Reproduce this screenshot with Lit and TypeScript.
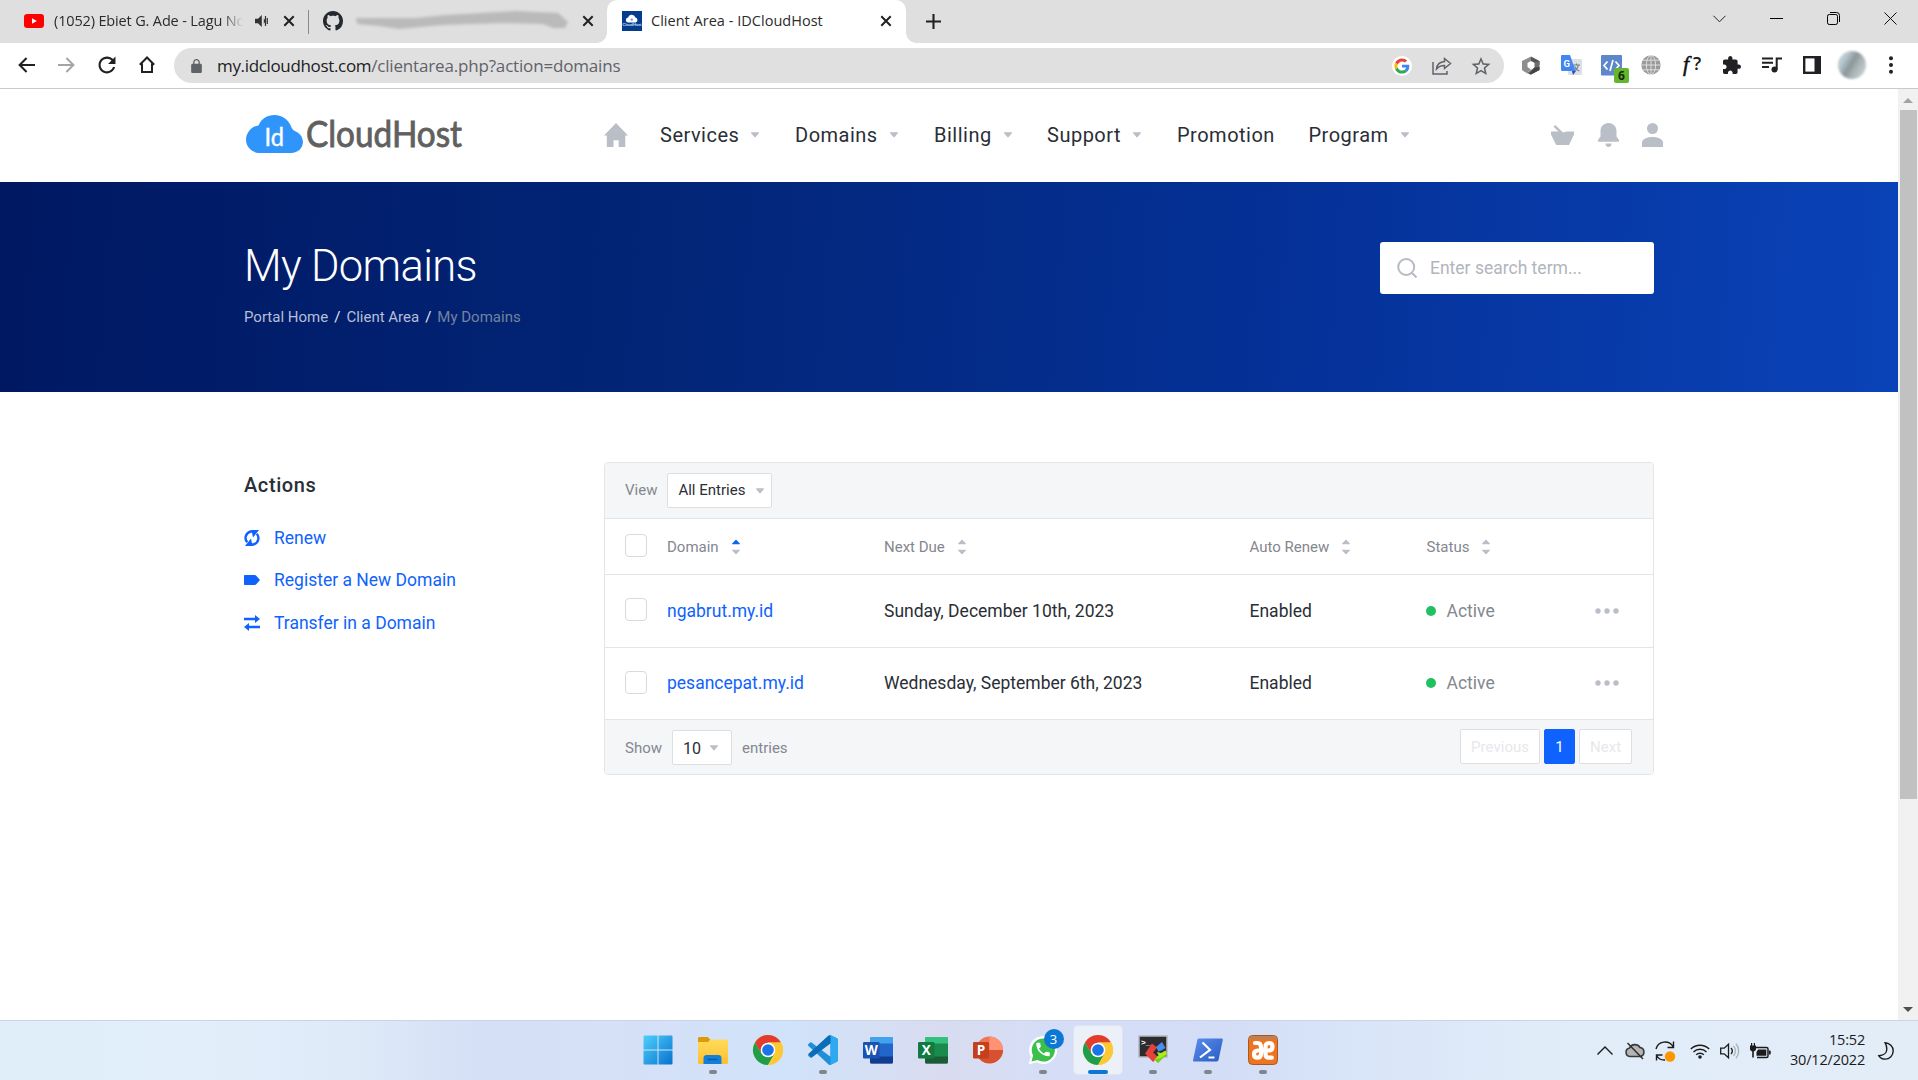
import { LitElement, html, svg, css, nothing } from "lit";
import { customElement } from "lit/decorators.js";
import { classMap } from "lit/directives/class-map.js";

const icon = (w: number, h: number, box: string, body: unknown) =>
  html`<svg width=${w} height=${h} viewBox=${box} fill="none">${body}</svg>`;

const caret = () =>
  icon(8, 6, "0 0 8 6", svg`<path d="M.6.3h6.8c.6 0 .8.6.4 1L4.6 5.1c-.3.4-.9.4-1.2 0L.2 1.3C-.2.9 0 .3.6.3z" fill="#b9bec7"/>`);

const closeX = () =>
  icon(12, 12, "0 0 12 12", svg`<path d="M1.3 1.3l9.4 9.4M10.7 1.3l-9.4 9.4" stroke="#202124" stroke-width="2"/>`);

const base = css`
  * { box-sizing: border-box; }
  svg { display: block; flex: none; overflow: visible; }
`;

@customElement("tab-strip")
class TabStrip extends LitElement {
  static styles = [base, css`
    :host { display: flex; height: 43px; background: #dfdfdf; font: 15px "Open Sans", "Noto Sans", sans-serif; color: #2b2b2b; }
    .tab { display: flex; align-items: center; height: 42px; }
    .video { padding-left: 24px; width: 308px; }
    .title { white-space: nowrap; overflow: hidden; line-height: 20px; font-size: 14.5px; letter-spacing: 0.02px; }
    .video .title { width: 191px; margin: 0 10px 0 10px; letter-spacing: -0.15px; mask-image: linear-gradient(90deg, #000 88%, transparent 99%); }
    .audio { margin-right: 14px; }
    .divider { width: 1px; height: 24px; margin-top: 10px; background: #8a8a8a; }
    .repo { padding-left: 14px; width: 298px; }
    .smudge { width: 217px; margin: 0 11px 0 11px; }
    .active { width: 299px; height: 43px; padding: 0 14px 1px 15px; background: #fff; border-radius: 10px 10px 0 0; position: relative; }
    .active::before, .active::after { content: ""; position: absolute; bottom: 0; width: 10px; height: 10px; }
    .active::before { left: -10px; background: radial-gradient(circle at 0 0, transparent 9.5px, #fff 10px); }
    .active::after { right: -10px; background: radial-gradient(circle at 100% 0, transparent 9.5px, #fff 10px); }
    .active .title { width: 230px; margin-left: 9px; }
    .new { display: flex; align-items: center; height: 42px; margin-left: 20px; flex: 1; }
    .controls { display: flex; align-items: center; height: 37px; gap: 43px; padding-right: 21px; }
    .controls svg { margin-left: 1px; }
  `];

  render() {
    return html`
      <div class="tab video">
        ${icon(20, 14, "0 0 20 14", svg`<rect width="20" height="14" rx="3.2" fill="#f00"/><path d="M8 4.2v5.6L12.8 7z" fill="#fff"/>`)}
        <span class="title">(1052) Ebiet G. Ade - Lagu No</span>
        <span class="audio">${icon(14, 14, "0 0 14 14", svg`<path d="M0 4.7h3L6.8 1v12L3 9.3H0z" fill="#333"/><path d="M8.8 4.2a3.6 3.6 0 010 5.6z" fill="#333"/><path d="M10.5 2v10M12.3 4v6" stroke="#333" stroke-width="1.2"/>`)}</span>
        ${closeX()}
      </div>
      <div class="divider"></div>
      <div class="tab repo">
        ${icon(20, 20, "0 0 16 16", svg`<path fill="#24292f" d="M8 0C3.58 0 0 3.58 0 8c0 3.54 2.29 6.53 5.47 7.59.4.07.55-.17.55-.38 0-.19-.01-.82-.01-1.49-2.01.37-2.53-.49-2.69-.94-.09-.23-.48-.94-.82-1.13-.28-.15-.68-.52-.01-.53.63-.01 1.08.58 1.23.82.72 1.21 1.87.87 2.33.66.07-.52.28-.87.51-1.07-1.78-.2-3.64-.89-3.64-3.95 0-.87.31-1.59.82-2.15-.08-.2-.36-1.02.08-2.12 0 0 .67-.21 2.2.82.64-.18 1.32-.27 2-.27.68 0 1.36.09 2 .27 1.53-1.04 2.2-.82 2.2-.82.44 1.1.16 1.92.08 2.12.51.56.82 1.27.82 2.15 0 3.07-1.87 3.75-3.65 3.95.29.25.54.73.54 1.48 0 1.07-.01 1.93-.01 2.2 0 .21.15.46.55.38A8.01 8.01 0 0016 8c0-4.42-3.58-8-8-8z"/>`)}
        <span class="smudge">${icon(217, 20, "0 0 217 20", svg`
          <defs><filter id="s" x="-5%" y="-50%" width="110%" height="200%"><feGaussianBlur stdDeviation="1.8"/></filter></defs>
          <path filter="url(#s)" d="M2 7l60 0 30-3 70-4 42 2 10 9-3 6-12 0-10-4-40-1-60 2-44 4-20-3-22-2z" fill="#bababa"/>`)}</span>
        ${closeX()}
      </div>
      <div class="tab active">
        ${icon(20, 20, "0 0 20 20", svg`<rect width="20" height="20" fill="#053d8c"/><path d="M6.5 11.4a2.4 2.4 0 01-.4-4.8 3.8 3.8 0 017.3-.2 2.6 2.6 0 01.3 5z" fill="#fff"/><circle cx="9.8" cy="8.6" r="1.2" fill="#5aa0ec"/><text x="10" y="15.4" font-size="4" text-anchor="middle" font-weight="700" fill="#cfe0f5" font-family="Lato">CloudHost</text>`)}
        <span class="title">Client Area - IDCloudHost</span>
        ${closeX()}
      </div>
      <div class="new">${icon(15, 15, "0 0 15 15", svg`<path d="M7.5 0v15M0 7.5h15" stroke="#202124" stroke-width="2.1"/>`)}</div>
      <div class="controls">
        ${icon(13, 8, "0 0 13 8", svg`<path d="M.5.8l6 6 6-6" stroke="#222"/>`)}
        ${icon(13, 13, "0 0 13 13", svg`<path d="M0 6.500h13" stroke="#000"/>`)}
        ${icon(13, 13, "0 0 13 13", svg`<rect x=".5" y="2.5" width="10" height="10" rx="1.8" stroke="#000"/><path d="M3 .5h6.5a3 3 0 013 3V10" stroke="#000"/>`)}
        ${icon(13, 13, "0 0 13 13", svg`<path d="M.5.5l12 12M12.5.5l-12 12" stroke="#111"/>`)}
      </div>`;
  }
}

@customElement("address-bar")
class AddressBar extends LitElement {
  static styles = [base, css`
    :host { display: flex; align-items: center; height: 46px; padding: 0 7px 1px 18px; background: #fff; border-bottom: 1px solid #c9cacc; font-family: "Open Sans", "Noto Sans", sans-serif; }
    .nav { display: flex; align-items: center; gap: 23px; width: 156px; margin-top: -1px; }
    .omni { display: flex; align-items: center; width: 1330px; height: 35px; border-radius: 18px; background: #e0e0e0; padding: 0 13px 0 17px; margin-top: 1px; }
    .url { flex: 1; margin-left: 15px; font-size: 17px; line-height: 24px; color: #5f6368; letter-spacing: -0.17px; white-space: nowrap; }
    .host { color: #202124; letter-spacing: -0.34px; }
    .acts { display: flex; align-items: center; gap: 19.5px; }
    .ext { display: grid; grid-template-columns: repeat(10, 40px); align-items: center; justify-items: center; padding-left: 7px; }
    .ext svg:nth-child(n + 6):nth-child(-n + 9) { margin-left: 2px; }
  `];

  render() {
    return html`
      <div class="nav">
        ${icon(17, 16, "0 0 17 16", svg`<path d="M17 8H1.6M8.6 1L1.6 8l7 7" stroke="#202124" stroke-width="2"/>`)}
        ${icon(17, 16, "0 0 17 16", svg`<path d="M0 8h15.4M8.4 1l7 7-7 7" stroke="#a5a5a5" stroke-width="2"/>`)}
        ${icon(18, 18, "3.5 3.5 17 17", svg`<path fill="#202124" d="M17.65 6.35C16.2 4.9 14.21 4 12 4c-4.42 0-7.99 3.58-7.99 8s3.57 8 7.99 8c3.73 0 6.84-2.55 7.73-6h-2.08c-.82 2.33-3.04 4-5.65 4-3.31 0-6-2.69-6-6s2.69-6 6-6c1.66 0 3.14.69 4.22 1.78L13 11h7V4l-2.35 2.35z"/>`)}
        ${icon(16, 17, "0 0 16 17", svg`<path d="M.8 8.8L8 1.5l7.2 7.3M3 7.5V16h10V7.5" stroke="#202124" stroke-width="2"/>`)}
      </div>
      <div class="omni">
        ${icon(11, 14, "4 1 16 21", svg`<path fill="#5f6368" d="M18 8h-1V6c0-2.76-2.24-5-5-5S7 3.24 7 6v2H6c-1.1 0-2 .9-2 2v10c0 1.1.9 2 2 2h12c1.1 0 2-.9 2-2V10c0-1.1-.9-2-2-2zM9 6c0-1.66 1.34-3 3-3s3 1.34 3 3v2H9V6z"/>`)}
        <span class="url"><span class="host">my.idcloudhost.com</span>/clientarea.php?action=domains</span>
        <div class="acts">
          ${icon(20, 20, "0 0 20 20", svg`<circle cx="10" cy="10" r="10" fill="#fff"/><g transform="translate(2.4 2.4) scale(.317)">
            <path fill="#4285F4" d="M46.98 24.55c0-1.57-.15-3.09-.38-4.55H24v9.02h12.94c-.58 2.96-2.26 5.48-4.78 7.18l7.73 6c4.51-4.18 7.09-10.36 7.09-17.65z"/>
            <path fill="#EA4335" d="M24 9.5c3.54 0 6.71 1.22 9.21 3.6l6.85-6.85C35.9 2.38 30.47 0 24 0 14.62 0 6.51 5.38 2.56 13.22l7.98 6.19C12.43 13.72 17.74 9.5 24 9.5z"/>
            <path fill="#FBBC05" d="M10.53 28.59A14.5 14.5 0 019.77 24c0-1.6.27-3.14.76-4.59l-7.98-6.19A23.9 23.9 0 000 24c0 3.88.92 7.54 2.56 10.78l7.97-6.19z"/>
            <path fill="#34A853" d="M24 48c6.48 0 11.93-2.13 15.89-5.81l-7.73-6c-2.15 1.45-4.92 2.3-8.16 2.3-6.26 0-11.57-4.22-13.47-9.91l-7.98 6.19C6.51 42.62 14.62 48 24 48z"/></g>`)}
          ${icon(20, 18, "0 0 20 18", svg`<path d="M1 5v12h14v-3M12.5 1.5l6 5-6 5V8.600C9 8.600 6.500 9.800 4.500 12c.5-4.500 3.500-7 8-7.400z" stroke="#5f6368" stroke-width="1.5"/>`)}
          ${icon(20, 20, "1.5 1 21 21", svg`<path fill="#5f6368" d="M22 9.24l-7.19-.62L12 2 9.19 8.63 2 9.24l5.46 4.73L5.82 21 12 17.27 18.18 21l-1.63-7.03L22 9.24zM12 15.4l-3.76 2.27 1-4.28-3.32-2.88 4.38-.38L12 6.1l1.71 4.04 4.38.38-3.32 2.88 1 4.28L12 15.4z"/>`)}
        </div>
      </div>
      <div class="ext">
        ${icon(18, 19, "0 0 18 19", svg`<path d="M9 .5L0 5v9l4.5 3 4.5-3.5L5.500 11V7L9 5z" fill="#8d8d8d"/><path d="M9 .5V5l4 2 4.500 2V5z" fill="#555"/><path d="M17.500 5v9L9 18.500 4.500 17 9 14l3.500-2.500V6.800z" fill="#6d6d6d"/><path d="M17.500 11v3L9 18.500l-2-.6 5.500-6.400z" fill="#444"/>`)}
        ${icon(21, 21, "0 0 21 21", svg`<rect x="7" y="4" width="14" height="16" rx="1.2" fill="#dcdfe3"/><path d="M12 10h7M15.500 8.500V10M13 16c2.500-1.200 4-3.500 4.300-6M13.500 11.500c.8 2.200 2.500 3.600 4.800 4.500" stroke="#6d8189" stroke-width="1.2"/><path d="M11 16h4l-3 4z" fill="#2a48c8"/><path d="M1.200 0H9l5.500 16H1.200C.5 16 0 15.500 0 14.800V1.200C0 .5.500 0 1.200 0z" fill="#4285f4"/><text x="2.400" y="11.500" font-size="9.500" font-weight="700" fill="#fff" font-family="Roboto">G</text>`)}
        ${icon(21, 21, "0 0 21 21", svg`<rect width="21" height="20.5" rx="1" fill="#5d86cb"/><path d="M6.500 6.500L3 10.500l3.500 4M14.500 6.500l3.500 4-3.500 4M12 5L9 16" stroke="#fff" stroke-width="1.7"/><rect x="13" y="13" width="15" height="15" rx="2" fill="#64b62e"/><text x="20.500" y="25" font-size="12" font-weight="700" text-anchor="middle" fill="#16280a" font-family="Open Sans">6</text>`)}
        ${icon(20, 20, "0 0 20 20", svg`<circle cx="10" cy="10" r="9.7" fill="#9a9a9a"/><g stroke="#e4e4e4" stroke-width=".9"><ellipse cx="10" cy="10" rx="4.6" ry="9.7"/><path d="M10 0v20M.4 10h19.2M1.700 5.200h16.600M1.700 14.800h16.600"/></g>`)}
        ${icon(21, 20, "0 0 21 20", svg`<text x="2" y="15.500" font-size="22" font-style="italic" fill="#111" stroke="#111" stroke-width=".5" font-family="Liberation Serif">f</text><text x="12" y="15" font-size="18" font-weight="600" fill="#1b1b1b" font-family="Open Sans">?</text>`)}
        ${icon(18, 18, "2 1 21 21", svg`<path fill="#202124" d="M20.5 11H19V7c0-1.1-.9-2-2-2h-4V3.5C13 2.12 11.88 1 10.5 1S8 2.12 8 3.5V5H4c-1.1 0-1.99.9-1.99 2v3.8H3.5c1.49 0 2.7 1.21 2.7 2.7s-1.21 2.7-2.7 2.7H2V20c0 1.1.9 2 2 2h3.8v-1.5c0-1.49 1.21-2.7 2.7-2.7 1.49 0 2.7 1.21 2.7 2.7V22H17c1.1 0 2-.9 2-2v-4h1.5c1.38 0 2.5-1.12 2.5-2.5S21.88 11 20.5 11z"/>`)}
        ${icon(20, 16, "0 0 20 16", svg`<path d="M0 1.500h11M0 5.800h11M0 10h7" stroke="#202124" stroke-width="2"/><circle cx="12.500" cy="12.500" r="3" fill="#202124"/><path d="M14.700 12.500V1.500H20" stroke="#202124" stroke-width="2"/>`)}
        ${icon(18, 18, "0 0 18 18", svg`<rect x="1.2" y="1.2" width="15.6" height="15.6" stroke="#202124" stroke-width="2.4"/><path d="M11.500 1h5.500v16h-5.500z" fill="#202124"/>`)}
        ${icon(30, 30, "0 0 30 30", svg`<defs><linearGradient id="av" x1="0" y1="0" x2="1" y2=".6"><stop offset="0" stop-color="#cfe0e6"/><stop offset=".3" stop-color="#b5c6cd"/><stop offset=".55" stop-color="#8b979b"/><stop offset=".75" stop-color="#aab4b5"/><stop offset="1" stop-color="#c2cccd"/></linearGradient><filter id="ab"><feGaussianBlur stdDeviation=".8"/></filter></defs><circle cx="15" cy="15" r="14" fill="url(#av)" filter="url(#ab)"/>`)}
        ${icon(10, 18, "0 0 10 18", svg`<g fill="#202124"><circle cx="5" cy="2.3" r="2"/><circle cx="5" cy="9" r="2"/><circle cx="5" cy="15.7" r="2"/></g>`)}
      </div>`;
  }
}

@customElement("site-header")
class SiteHeader extends LitElement {
  static styles = [base, css`
    :host { display: flex; align-items: center; height: 93px; padding: 0 235px 2px 246px; background: #fff; font: 20px Roboto, sans-serif; color: #2a2e36; }
    .logo { width: 358px; margin-top: -2px; }
    .menu { display: grid; grid-template-columns: 56px 135px 139px 113px 130px 131.5px 1fr; align-items: center; flex: 1; }
    .item { display: flex; align-items: center; gap: 12px; letter-spacing: 0.5px; line-height: 28px; }
    .tools { display: flex; align-items: center; gap: 23.5px; }
  `];

  render() {
    const items: [string, boolean][] = [["Services", true], ["Domains", true], ["Billing", true], ["Support", true], ["Promotion", false], ["Program", true]];
    return html`
      <div class="logo">${icon(218, 38, "0 0 218 38", svg`
        <path d="M13 38A13.5 13.5 0 010 25C0 17.5 5.500 11.300 12.500 10.500 15 4 21.500 0 28.500 0c8 0 14.500 5 17 12.500 1 2 2 3 4.500 4A13 13 0 0157 26.500C57 33 52 38 45 38z" fill="#2f95fb"/>
        <text x="18.5" y="30.5" font-size="25" fill="#fff" stroke="#fff" stroke-width=".4" font-family="Lato" textLength="19.5" lengthAdjust="spacingAndGlyphs">Id</text>
        <text x="60" y="32.3" font-size="37.5" fill="#60615f" stroke="#60615f" stroke-width=".9" font-family="Lato" textLength="156" lengthAdjust="spacingAndGlyphs">CloudHost</text>`)}</div>
      <nav class="menu">
        ${icon(24, 24, "0 0 24 24", svg`<path d="M12 0l12 12.500h-2.700V24h-6.600v-6.800H9.500V24H2.800V12.500H0z" fill="#b9bec7"/>`)}
        ${items.map(([label, drop]) => html`<div class="item"><span>${label}</span>${drop ? caret() : nothing}</div>`)}
      </nav>
      <div class="tools">
        ${icon(23, 20, "0 0 23 20", svg`<path d="M0 6.500h7.500L2.500 1.800 4.300 0l7.700 7.600 3.500-1.100H23v3L18 20H5.200L0 9.500z" fill="#b9bec7"/>`)}
        ${icon(21, 24, "0 0 21 24", svg`<path d="M10.500 0C5.600 0 2.500 3.700 2.500 8v5.500L0 17v1.800h21V17l-2.500-3.500V8c0-4.300-3.100-8-8-8zM7.500 20.500h6c0 2-1.200 3.500-3 3.500s-3-1.500-3-3.500z" fill="#b9bec7"/>`)}
        ${icon(21, 24, "0 0 21 24", svg`<circle cx="10.5" cy="5.5" r="5.5" fill="#b9bec7"/><path d="M0 24v-4.500C0 16.500 4 14 10.500 14S21 16.500 21 19.500V24z" fill="#b9bec7"/>`)}
      </div>`;
  }
}

@customElement("page-hero")
class PageHero extends LitElement {
  static styles = [base, css`
    :host { display: flex; justify-content: space-between; height: 210px; padding: 60px 244px 0 244px; background: linear-gradient(94deg, #001862 0%, #022577 35%, #05329a 70%, #0a43b8 100%); font-family: Roboto, sans-serif; color: #fff; }
    .title { margin: 0; font-weight: 300; font-size: 43.5px; line-height: 50px; letter-spacing: -0.65px; }
    .crumbs { display: flex; gap: 6px; margin-top: 14px; font-size: 15px; line-height: 22px; color: #b6bfd6; }
    .slash { color: #e4e8f2; }
    .here { color: #74839f; }
    .search { display: flex; align-items: center; width: 274px; height: 52px; padding-left: 17px; gap: 13px; border-radius: 3px; background: #fff; color: #b1b5bd; font-size: 17.5px; }
  `];

  render() {
    return html`
      <div>
        <h1 class="title">My Domains</h1>
        <div class="crumbs"><span>Portal Home</span><span class="slash">/</span><span>Client Area</span><span class="slash">/</span><span class="here">My Domains</span></div>
      </div>
      <div class="search">
        ${icon(20, 20, "0 0 20 20", svg`<circle cx="9.2" cy="9" r="8" stroke="#b5bac3" stroke-width="2"/><path d="M14.500 14.500l5 5" stroke="#b5bac3" stroke-width="2"/>`)}
        <span>Enter search term...</span>
      </div>`;
  }
}

@customElement("actions-menu")
class ActionsMenu extends LitElement {
  static styles = [base, css`
    :host { display: block; width: 360px; font-family: Roboto, sans-serif; }
    .head { margin: 9px 0 18px; font-size: 20px; line-height: 28px; font-weight: 500; color: #2a2e36; letter-spacing: 0.6px; }
    .link { display: flex; align-items: center; gap: 14px; height: 42.3px; font-size: 17.5px; color: #1062fe; }
  `];

  render() {
    return html`
      <h2 class="head">Actions</h2>
      <div class="link">${icon(16, 16, "0 0 16 16", svg`<path d="M3.300 12.300C.2 9 1.300 3.200 6.500 1.500h3M12.700 3.700C15.800 7 14.700 12.800 9.500 14.500h-3" stroke="#1062fe" stroke-width="2.4"/><path d="M7.500 0H15L9 7.500zM8.500 16H1L7 8.500z" fill="#1062fe"/>`)}<span>Renew</span></div>
      <div class="link">${icon(16, 10, "0 0 16 10", svg`<path d="M1 0h9.500c.8 0 1.500.3 2 .9L16 5l-3.500 4.100c-.5.6-1.200.9-2 .9H1c-.6 0-1-.4-1-1V1c0-.6.4-1 1-1z" fill="#1062fe"/>`)}<span>Register a New Domain</span></div>
      <div class="link">${icon(16, 16, "0 0 16 16", svg`<path d="M0 4h12M4 12h12" stroke="#1062fe" stroke-width="2.4"/><path d="M11 0l5 4-5 4zM5 8l-5 4 5 4z" fill="#1062fe"/>`)}<span>Transfer in a Domain</span></div>`;
  }
}

interface Domain { name: string; due: string; renew: string; status: string; }

@customElement("domain-table")
class DomainTable extends LitElement {
  static styles = [base, css`
    :host { display: block; width: 1050px; border: 1px solid #e3e5e9; border-radius: 4px; overflow: hidden; font: 17.5px Roboto, sans-serif; color: #2a2e36; }
    .bar { display: flex; align-items: center; padding: 0 20px; background: #f5f6f8; font-size: 15px; color: #84878f; }
    .top { height: 55px; line-height: 16px; }
    .top span { padding-bottom: 2px; }
    .foot { height: 54px; padding-right: 21px; }
    .label { padding-top: 2px; }
    .select { display: flex; align-items: center; justify-content: space-between; height: 35px; padding: 0 7px 0 10px; border: 1px solid #dcdee2; border-radius: 2px; background: #fff; color: #2a2e36; }
    .view { width: 105px; margin-left: 10px; }
    .count { width: 60px; margin: 0 10px 0 10px; padding: 2px 13px 0 10px; font-size: 16px; }
    .grid { display: grid; grid-template-columns: 42px 217px 365.5px 177px 168px 1fr; align-items: center; padding-left: 20px; border-top: 1px solid #e3e5e9; }
    .head { height: 56px; font-size: 15px; color: #84878f; }
    .row { height: 73px; }
    .row.last { border-bottom: 1px solid #e3e5e9; padding-bottom: 2px; }
    .th { display: flex; align-items: center; gap: 13px; }
    .box { width: 22px; height: 23px; margin-bottom: 2px; border: 1px solid #d8dade; border-radius: 4px; background: #fff; }
    .row .box { margin-bottom: 3px; }
    .row.last .box { margin-bottom: 1px; }
    .name { color: #1062fe; }
    .state { display: flex; align-items: center; gap: 11px; color: #84878f; margin-left: -1px; }
    .dot { width: 10px; height: 10px; border-radius: 50%; background: #20c161; }
    .gap { flex: 1; }
    .page { height: 35px; padding: 0 10px; border: 1px solid #dcdee2; border-radius: 2px; background: #fff; color: #e6e8ec; line-height: 34px; margin-left: 4px; margin-top: -2px; letter-spacing: 0.05px; text-align: center; }
    .prev { width: 80px; }
    .next { width: 53px; }
    .current { width: 31px; background: #1062fe; border-color: #1062fe; color: #fff; }
  `];

  private sort(up = "#b9bec7") {
    return icon(8, 16, "0 0 8 16", svg`<path d="M.5 5.3h7c.5 0 .7-.5.3-.9L4.500.9a.7.7 0 00-1 0L.2 4.400c-.4.4-.2.9.3.9z" fill=${up}/><path d="M.5 10.700h7c.5 0 .7.5.3.9L4.500 15.100a.7.7 0 01-1 0L.2 11.600c-.4-.4-.2-.9.3-.9z" fill="#b9bec7"/>`);
  }

  private rows: Domain[] = [
    { name: "ngabrut.my.id", due: "Sunday, December 10th, 2023", renew: "Enabled", status: "Active" },
    { name: "pesancepat.my.id", due: "Wednesday, September 6th, 2023", renew: "Enabled", status: "Active" },
  ];

  render() {
    return html`
      <div class="bar top"><span>View</span><div class="select view"><span>All Entries</span>${caret()}</div></div>
      <div class="grid head">
        <div class="box"></div>
        <div class="th"><span>Domain</span>${this.sort("#1062fe")}</div>
        <div class="th"><span>Next Due</span>${this.sort()}</div>
        <div class="th"><span>Auto Renew</span>${this.sort()}</div>
        <div class="th"><span>Status</span>${this.sort()}</div>
      </div>
      ${this.rows.map((r, i) => html`
        <div class=${classMap({ grid: true, row: true, last: i === this.rows.length - 1 })}>
          <div class="box"></div>
          <div class="name">${r.name}</div>
          <div>${r.due}</div>
          <div>${r.renew}</div>
          <div class="state"><span class="dot"></span><span>${r.status}</span></div>
          ${icon(24, 6, "0 0 24 6", svg`<g fill="#b9bec7"><circle cx="3" cy="3" r="2.7"/><circle cx="12" cy="3" r="2.7"/><circle cx="21" cy="3" r="2.7"/></g>`)}
        </div>`)}
      <div class="bar foot">
        <span class="label">Show</span><div class="select count"><span>10</span>${caret()}</div><span class="label">entries</span>
        <span class="gap"></span>
        <span class="page prev">Previous</span><span class="page current">1</span><span class="page next">Next</span>
      </div>`;
  }
}

const chromeLogo = () => icon(30, 30, "0 0 30 30", svg`
  <circle cx="15" cy="15" r="15" fill="#fcc934"/>
  <path d="M2 7.500A15 15 0 0128 7.500H15L8.500 18.800z" fill="#e33b2e"/>
  <path d="M2 7.500L8.500 18.800 21.500 18.800 15 30A15 15 0 012 7.500z" fill="#1e9e4a"/>
  <path d="M28 7.500A15 15 0 0115 30l6.500-11.200L21.500 11.200 15 7.500z" fill="#fcc934"/>
  <circle cx="15" cy="15" r="7.3" fill="#fff"/><circle cx="15" cy="15" r="5.8" fill="#1a73e8"/>`);

const office = (letter: string, dark: string, mid: string, light: string, deep: string) => icon(30, 30, "0 0 30 30", svg`
  <rect x="7" y="2" width="23" height="26.5" rx="1.5" fill=${mid}/>
  <path d="M8.500 2h20c.8 0 1.500.7 1.500 1.500V8.500H7V3.500C7 2.700 7.700 2 8.500 2z" fill=${light}/>
  <path d="M7 21.500h23V27c0 .8-.7 1.500-1.500 1.500h-20c-.8 0-1.500-.7-1.500-1.500z" fill=${deep}/>
  <rect y="7" width="16.5" height="16.5" rx="1.2" fill=${dark}/>
  <text x="8.2" y="20" font-size="13.5" font-weight="700" text-anchor="middle" fill="#fff" font-family="Open Sans">${letter}</text>`);

@customElement("task-bar")
class TaskBar extends LitElement {
  static styles = [base, css`
    :host { display: flex; height: 60px; padding-left: 633px; border-top: 1px solid #c9d4e8; background: linear-gradient(90deg, #dfeef8 0, #e2effa 10%, #dfeaf8 18%, #d5dff6 25%, #d6e0f7 32%, #d0e3fa 41%, #d9dcf0 49%, #d5def6 55%, #d3def6 64%, #d8e4f8 70%, #e0ecf8 80%, #e2edf8 100%); font: 14.5px "Open Sans", "Noto Sans", sans-serif; color: #1b1b1b; }
    .apps { display: flex; gap: 7px; flex: 1; padding: 5px 0 0 0.5px; }
    .app { position: relative; width: 48px; height: 48px; display: flex; align-items: center; justify-content: center; border-radius: 4px; flex: none; }
    .focus { background: #ecf0f9; box-shadow: 0 0 0 1px #dfe4f0; }
    .app.open::after { content: ""; position: absolute; bottom: 0; left: 20px; width: 8px; height: 4px; border-radius: 2px; background: #80858d; }
    .app.focus::after { left: 14px; width: 20px; background: #0a78d4; }
    .badge { position: absolute; left: 25px; top: 3px; width: 20px; height: 20px; border-radius: 50%; background: #0a78d4; color: #fff; font-size: 13px; line-height: 20px; text-align: center; }
    .tray { display: flex; align-items: center; width: 321px; height: 59px; }
    .i { display: flex; }
    .a { margin-right: 12px; } .b { margin-right: 10px; } .c { margin-right: 15px; } .d { margin-right: 10px; } .e { margin-right: 10px; }
    .clock { width: 94px; text-align: right; line-height: 20px; letter-spacing: -0.2px; margin: -2px 13px 0 0; }
  `];

  render() {
    const apps: [unknown, string][] = [
      [icon(30, 30, "0 0 30 30", svg`<defs><linearGradient id="w" x1="0" y1="0" x2="1" y2="1"><stop stop-color="#4fd0fb"/><stop offset="1" stop-color="#0672cf"/></linearGradient></defs><path d="M1.500.5h13v14H.5v-13c0-.6.4-1 1-1zM15.500.5h13c.6 0 1 .4 1 1v13h-14zM.5 15.500h14v14h-13c-.6 0-1-.4-1-1zM15.500 15.500h14v13c0 .6-.4 1-1 1h-13z" fill="url(#w)"/>`), ""],
      [icon(30, 28, "0 0 30 28", svg`<path d="M1.500 1h8.200l3 3H30v6H0V2.500C0 1.700.7 1 1.500 1z" fill="#dd9a07"/><defs><linearGradient id="f" x1="0" y1="0" x2="0" y2="1"><stop stop-color="#ffdb5c"/><stop offset="1" stop-color="#fdbf2c"/></linearGradient></defs><path d="M0 6h10l2.500-2.500h16c.8 0 1.500.7 1.500 1.500v21.500c0 .8-.7 1.500-1.500 1.500h-27C.7 28 0 27.300 0 26.500z" fill="url(#f)"/><path d="M5.500 28v-6c0-1.700 1.300-3 3-3h12c1.700 0 3 1.300 3 3v6z" fill="#1280d8"/><path d="M9.500 23.500h10" stroke="#0c58a4" stroke-width="1.5"/>`), "open"],
      [chromeLogo(), ""],
      [icon(30, 30, "0 0 100 100", svg`<path fill="#1f8fd6" d="M96.46 10.8L75.86.88a6.23 6.23 0 00-7.1 1.2L29.35 38.04 12.19 25.01a4.16 4.16 0 00-5.32.24L1.37 30.26a4.17 4.17 0 000 6.16L16.25 50 1.37 63.58a4.17 4.17 0 000 6.16l5.5 5.01a4.16 4.16 0 005.32.24l17.16-13.03 39.41 35.96a6.22 6.22 0 007.1 1.2l20.6-9.92A6.25 6.25 0 00100 83.58V16.42a6.25 6.25 0 00-3.54-5.62zM75.02 72.7L45.11 50l29.91-22.7z"/><path d="M75 1l21.5 9.800A6 6 0 01100 16.400v67.200a6 6 0 01-3.500 5.600L75 99z" fill="#2ea8ee"/><path d="M1.400 63.600L68 2.500l7 1v23.800L12.200 75z" fill="#0b6db8"/>`), "open"],
      [office("W", "#1853b4", "#2266c9", "#43a2ee", "#123c92"), ""],
      [office("X", "#107a41", "#1c8a4d", "#32c17f", "#1b5c37"), ""],
      [icon(30, 30, "0 0 30 30", svg`<circle cx="16.5" cy="15" r="13.5" fill="#ee7654"/><path d="M16.500 1.500A13.500 13.500 0 0130 15H16.500z" fill="#ff9274"/><path d="M3.500 18.500L16.500 15H30a13.500 13.500 0 01-26.500 3.500z" fill="#d5512f"/><rect y="7" width="16" height="16.5" rx="1.2" fill="#c43f1d"/><text x="8" y="20" font-size="13.5" font-weight="700" text-anchor="middle" fill="#fff" font-family="Open Sans">P</text>`), ""],
      [html`${icon(30, 30, "0 0 30 30", svg`<path d="M.5 29.500l2.200-8A14 14 0 1115.200 29a14 14 0 01-6.700-1.700z" fill="#fff"/><path d="M3.500 26.500l1.600-6A11.600 11.600 0 1115 26.600a11.600 11.600 0 01-5.600-1.500z" fill="#3cc04c"/><path transform="translate(6 5.5) scale(.75)" fill="#fff" d="M6.62 10.79c1.44 2.83 3.76 5.14 6.59 6.59l2.2-2.2c.27-.27.67-.36 1.02-.24 1.12.37 2.33.57 3.57.57.55 0 1 .45 1 1V20c0 .55-.45 1-1 1-9.39 0-17-7.61-17-17 0-.55.45-1 1-1h3.5c.55 0 1 .45 1 1 0 1.25.2 2.45.57 3.57.11.35.03.74-.25 1.02l-2.2 2.2z"/>`)}<span class="badge">3</span>`, "open"],
      [chromeLogo(), "open focus"],
      [icon(30, 30, "0 0 30 30", svg`<rect x="1" y="1" width="28" height="21" fill="#2b2c30" stroke="#b9b9bd" stroke-width="1.5"/><text x="3" y="9.5" font-size="8" font-weight="700" fill="#fff" font-family="Liberation Mono">&gt;_</text><path d="M14 8.500l5 4-4 5 5 4.500-5 5-8-8.500z" fill="#e8413c"/><path d="M18 12l6-5 3.500 6-4 2.500-3 1z" fill="#4a8df0"/><path d="M19 17l4 1 4.500-2.500L29 19l-9 9-3.500-3.500 4-4z" fill="#a6ec1c"/><path d="M20 28l-3.500-3.500 6-1.500 6.500-4z" fill="#6fd11e"/>`), "open"],
      [icon(30, 24, "0 0 30 24", svg`<defs><linearGradient id="p" x1="0" y1="0" x2="1" y2="1"><stop stop-color="#5a8df0"/><stop offset="1" stop-color="#2a5cc0"/></linearGradient></defs><path d="M6 .5h22.500c.9 0 1.500.7 1.300 1.600l-4.300 20c-.2.8-.9 1.400-1.700 1.400H1.300c-.9 0-1.400-.7-1.200-1.600l4.200-20C4.500 1.100 5.200.5 6 .5z" fill="url(#p)"/><path d="M9.500 4.500l7.500 7.300L7 19.500M15.500 19.500h6" stroke="#fff" stroke-width="2.2"/>`), "open"],
      [icon(30, 30, "0 0 30 30", svg`<rect x=".5" y=".5" width="29" height="29" rx="4" fill="#ef7420" stroke="#a65a22"/><path d="M1 4c0-2 1.500-3 3-3h22c1.500 0 3 1 3 3z" fill="#b8835c"/><g stroke="#fff" stroke-width="4.2" stroke-linejoin="round" stroke-linecap="round"><path d="M7 8H9.500C12 8 13 9.500 13 12s1 3.500 3 3.500h4M17 15.500h-4.500M10 15.500C7 15.500 6 17 6 19.200s1.200 3.500 3.500 3.500S13 21 13 18.500V12M17.500 12c0-2.500 1-4 3.500-4s3.500 1.500 3.500 3.700-1.200 3.800-4 3.800M17.500 12v7c0 2.300 1 3.700 3.300 3.700h3"/></g>`), "open"],
    ];
    return html`
      <div class="apps">${apps.map(([art, state]) => html`<div class="app ${state}">${art}</div>`)}</div>
      <div class="tray">
        <span class="i a">${icon(16, 9, "0 0 16 9", svg`<path d="M.5 8.500L8 1l7.500 7.500" stroke="#1b1b1b" stroke-width="1.4"/>`)}</span>
        <span class="i b">${icon(20, 18, "0 0 20 18", svg`<path d="M5 14.500a4.300 4.300 0 01-.5-8.500A6 6 0 0115 5.500a4.600 4.600 0 01.5 9z" fill="#b4b4b4" stroke="#3a3a3a" stroke-width="1.6"/><path d="M2.500 1L18 17" stroke="#2d2d2d" stroke-width="1.5"/>`)}</span>
        <span class="i c">${icon(20, 20, "0 0 20 20", svg`<path d="M1 8A9.300 9.300 0 0118 5.500M18.500.5v6h-6M1.500 19.500v-5.500h6M1.500 14.500A9.300 9.300 0 0010 19" stroke="#1b1b1b" stroke-width="1.4"/><circle cx="15" cy="15.5" r="5.2" fill="#ff9500"/>`)}</span>
        <span class="i d">${icon(20, 16, "0 0 20 16", svg`<g stroke="#1b1b1b" stroke-width="1.4"><path d="M.8 6a13 13 0 0118.400 0M3.500 9a9.200 9.200 0 0113 0M6.200 11.800a5.400 5.400 0 017.600 0"/></g><circle cx="10" cy="14" r="1.8" fill="#1b1b1b"/>`)}</span>
        <span class="i e">${icon(20, 18, "0 0 20 18", svg`<path d="M.7 6.200h3.500L8.500 2.200v13.600l-4.300-4H.7z" stroke="#1b1b1b" stroke-width="1.3"/><path d="M11 6a4.500 4.500 0 010 6" stroke="#1b1b1b" stroke-width="1.3"/><path d="M13.500 4a7.500 7.500 0 010 10M16 1.800a11 11 0 010 14.400" stroke="#a9b3bd" stroke-width="1.3"/>`)}</span>
        <span class="i">${icon(21, 16, "0 0 21 16", svg`<path d="M6 4.500h10.500c.8 0 1.500.7 1.500 1.500v7c0 .8-.7 1.500-1.500 1.500H7" stroke="#1b1b1b" stroke-width="1.5"/><path d="M8 6.500h8.300v6.300H6.500V9z" fill="#1b1b1b"/><path d="M19 7.500h1c.4 0 .7.3.7.7v2.600c0 .4-.3.7-.7.7h-1zM0 2.500h1V0h1.200v2.500h1.600V0H5v2.500h1V6c0 1.300-1 2.200-2.200 2.400v6.100H2.200V8.400C1 8.200 0 7.300 0 6z" fill="#1b1b1b"/>`)}</span>
        <div class="clock">15:52<br>30/12/2022</div>
        ${icon(16, 18, "0 0 16 18", svg`<path d="M7.200.8c5 .5 8 4 8 8 0 4.700-3.500 8.300-8 8.300-2.800 0-5-1.200-6.400-3.300C5.500 13.500 8.800 11 8.800 7.200c0-2.500-.6-4.600-1.600-6.400z" stroke="#1b1b1b" stroke-width="1.4"/>`)}
      </div>`;
  }
}

@customElement("app-root")
class AppRoot extends LitElement {
  static styles = [base, css`
    :host { display: flex; flex-direction: column; width: 1918px; height: 1080px; background: #fff; overflow: hidden; }
    .view { display: flex; height: 931px; }
    .page { width: 1898px; }
    .content { display: flex; align-items: flex-start; padding: 70px 244px 0; }
    .scroll { display: flex; flex-direction: column; align-items: center; width: 20px; background: #f1f1f1; padding: 9px 0 8px; }
    .thumb { width: 17px; height: 689px; background: #c1c1c1; margin: 7px 0 auto 0; }
  `];

  render() {
    return html`
      <tab-strip></tab-strip>
      <address-bar></address-bar>
      <div class="view">
        <div class="page">
          <site-header></site-header>
          <page-hero></page-hero>
          <div class="content">
            <actions-menu></actions-menu>
            <domain-table></domain-table>
          </div>
        </div>
        <div class="scroll">
          ${icon(10, 5, "0 0 10 5", svg`<path d="M0 5l5-5 5 5z" fill="#a3a3a3"/>`)}
          <div class="thumb"></div>
          ${icon(10, 5, "0 0 10 5", svg`<path d="M0 0l5 5 5-5z" fill="#505050"/>`)}
        </div>
      </div>
      <task-bar></task-bar>`;
  }
}
